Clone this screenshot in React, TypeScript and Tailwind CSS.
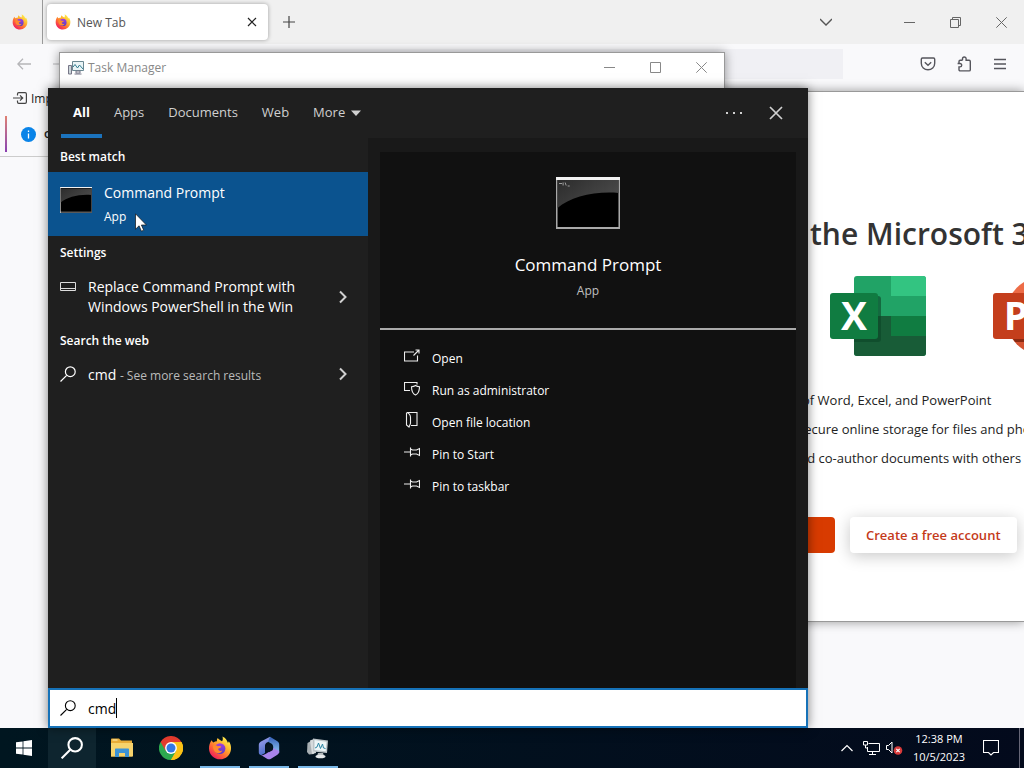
import { useState, type ReactNode } from "react";

const tabs = ["All", "Apps", "Documents", "Web"];

function FirefoxLogo({ className }: { className: string }) {
  return (
    <svg viewBox="0 0 24 24" className={className} aria-hidden="true">
      <defs>
        <linearGradient id="fx-body" x1="0.85" y1="0.1" x2="0.2" y2="0.95">
          <stop offset="0" stopColor="#fff14f" />
          <stop offset="0.35" stopColor="#ffb32c" />
          <stop offset="0.65" stopColor="#ff6a35" />
          <stop offset="1" stopColor="#f0195f" />
        </linearGradient>
        <linearGradient id="fx-globe" x1="0.5" y1="0" x2="0.5" y2="1">
          <stop offset="0" stopColor="#a23de0" />
          <stop offset="1" stopColor="#5a3fc0" />
        </linearGradient>
      </defs>
      <path
        d="M3.6 4.2C4 5.2 4.6 6 5.4 6.4 6.4 5.6 7.600 5.200 9 5.200 8.700 4 9 2.800 9.800 2c.9 1.500 2.500 2.300 4.200 3.200C15.200 4 14.900 1.700 14.400.4 18 2 19.300 4.600 19.800 6.700c.6-.3.9-.8 1-1.500 1.700 2.300 2.500 4.900 2.200 8C22.500 19 17.900 23.300 12 23.300 6 23.300 1.200 18.700 1 12.700.9 9.400 2 6.300 3.600 4.200Z"
        fill="url(#fx-body)"
      />
      <circle cx="12" cy="12.600" r="5.400" fill="url(#fx-globe)" />
      <path
        d="M5 9.600c2-.9 3.900-.4 5 .6 1.200-.2 2.900-.1 3.200.5-.3 1.100-2.300 1.300-2.900 2-.3 1.700 1.600 2.900 4.100 1.900-.9 2.300-3.700 3.400-6.100 2.200C6 15.700 4.700 12.500 5 9.600Z"
        fill="#ff8a2f"
      />
    </svg>
  );
}

function ConsoleIcon({ className, small }: { className: string; small?: boolean }) {
  return (
    <svg viewBox="0 0 63 52" className={className} preserveAspectRatio="none" aria-hidden="true">
      <defs>
        <linearGradient id="con-shine" x1="0" y1="0" x2="1" y2="0.6">
          <stop offset="0" stopColor="#2c2c2c" />
          <stop offset="1" stopColor="#4b4b4b" />
        </linearGradient>
      </defs>
      <rect width="63" height="52" fill={small ? "#5a5a5a" : "#a9a9a9"} />
      <rect width="63" height={small ? 2 : 3} fill="#f2f2f2" />
      {small && <rect width="1.500" height="52" fill="#d8d8d8" />}
      <rect x="1.500" y={small ? 2 : 3} width="60" height="47" fill="#000" />
      <path d="M1.500 3H61.500V16C38 14 14 20 1.500 31Z" fill="url(#con-shine)" />
      {!small && <path d="M3 6.500h3M7 5.500v3M9 5.500l1 3M11.500 9h2" stroke="#aaa" strokeWidth="0.900" />}
    </svg>
  );
}

function SearchGlyph({ className, weight }: { className: string; weight: number }) {
  return (
    <svg viewBox="0 0 16 16" className={className} fill="none" stroke="currentColor" strokeWidth={weight} aria-hidden="true">
      <circle cx="10.300" cy="5.700" r="4.900" />
      <path d="M6.700 9.300.5 15.500" />
    </svg>
  );
}

function ChevronRight() {
  return (
    <svg viewBox="0 0 8 14" className="h-3.5 w-2" fill="none" stroke="#d0d0d0" strokeWidth="2" aria-hidden="true">
      <path d="M1 1.500 6.500 7 1 12.500" />
    </svg>
  );
}

function WindowButtons({ restore }: { restore?: boolean }) {
  return (
    <div className={restore ? "flex text-[#666]" : "flex text-[#888]"}>
      <button type="button" aria-label="Minimize" className="flex h-7 w-[46px] items-center justify-center">
        <svg viewBox="0 0 11 11" className="size-[11px]" stroke="currentColor" fill="none"><path d="M0 5.500h11" /></svg>
      </button>
      <button type="button" aria-label="Maximize" className="flex h-7 w-[46px] items-center justify-center">
        <svg viewBox="0 0 11 11" className="size-[11px]" stroke="currentColor" fill="none">
          {restore ? <path d="M.5 2.500h8v8h-8zM2.500 2.500v-2h8v8h-2" /> : <path d="M.5.5h10v10H.5z" />}
        </svg>
      </button>
      <button type="button" aria-label="Close" className="flex h-7 w-[46px] items-center justify-center">
        <svg viewBox="0 0 11 11" className="size-[11px]" stroke="currentColor" fill="none"><path d="m.3.3 10.400 10.400M10.700.3.3 10.700" /></svg>
      </button>
    </div>
  );
}

function FirefoxWindow() {
  return (
    <div className="absolute inset-0 flex flex-col bg-[#f9f9fb] text-[#444]">
      <div className="flex h-11 items-center bg-[#f0f0f0]">
        <div className="flex h-full w-[43px] items-center border-r border-[#999] pl-3">
          <FirefoxLogo className="size-4" />
        </div>
        <div className="ml-1 flex h-9 w-[221px] items-center rounded bg-white pr-2.5 pl-2 shadow-[0_0_4px_rgba(0,0,0,0.35)]">
          <FirefoxLogo className="size-4" />
          <span className="ml-1.5 flex-1 pt-0.5 text-xs text-[#555]">New Tab</span>
          <button type="button" aria-label="Close tab">
            <svg viewBox="0 0 12 12" className="size-3" stroke="#222" strokeWidth="1.200"><path d="m2 2 8 8M10 2l-8 8" /></svg>
          </button>
        </div>
        <button type="button" aria-label="Open a new tab" className="ml-[15px]">
          <svg viewBox="0 0 12 12" className="size-3" stroke="#444" strokeWidth="1.200"><path d="M6 0v12M0 6h12" /></svg>
        </button>
        <button type="button" aria-label="List all tabs" className="mr-[54px] ml-auto">
          <svg viewBox="0 0 12 12" className="size-3" fill="none" stroke="#555" strokeWidth="1.400"><path d="m0 3 6 6 6-6" /></svg>
        </button>
        <WindowButtons restore />
      </div>
      <div className="flex h-10 items-center">
        <button type="button" aria-label="Back" className="ml-[17px]">
          <svg viewBox="0 0 14 12" className="h-3 w-3.5" fill="none" stroke="#b5b5b8" strokeWidth="1.300"><path d="M14 6H1M6 .800.8 6 6 11.200" /></svg>
        </button>
        <svg viewBox="0 0 14 12" className="ml-[22px] h-3 w-3.5" fill="none" stroke="#c5c5c8" strokeWidth="1.300"><path d="M0 6h13" /></svg>
        <div className="mr-[77px] ml-8 h-[30px] flex-1 bg-[#f0f0f4]" />
        <div className="mr-4 flex items-center gap-5 text-[#55555c]">
          <button type="button" aria-label="Save to Pocket">
            <svg viewBox="0 0 16 16" className="size-4" fill="none" stroke="currentColor" strokeWidth="1.400">
              <path d="M2.500 2h11c.7 0 1.200.5 1.200 1.200v4c0 3.900-3 6.600-6.700 6.600S1.300 11.100 1.300 7.200v-4C1.300 2.500 1.800 2 2.500 2Z" />
              <path d="m4.800 6.200 3.200 3 3.200-3" />
            </svg>
          </button>
          <button type="button" aria-label="Extensions">
            <svg viewBox="0 0 16 16" className="size-4" fill="none" stroke="currentColor" strokeWidth="1.400">
              <path d="M6.500 4.300V2.800a1.800 1.800 0 0 1 3.600 0v1.500h3c.7 0 1.200.5 1.200 1.200v8.200c0 .7-.5 1.200-1.200 1.200H4.200c-.7 0-1.200-.5-1.200-1.200v-2.800H4a1.700 1.700 0 0 0 0-3.400H1.600M3 7.300V5.500c0-.7.5-1.200 1.200-1.200h2.300" />
            </svg>
          </button>
          <button type="button" aria-label="Open menu">
            <svg viewBox="0 0 16 16" className="size-4" stroke="currentColor" strokeWidth="1.300"><path d="M2 3.500h12M2 8h12M2 12.500h12" /></svg>
          </button>
        </div>
      </div>
      <div className="flex h-7 items-center pl-[13px] text-xs text-[#222]">
        <svg viewBox="0 0 14 12" className="mr-1 h-3 w-3.5" fill="none" stroke="#444" strokeWidth="1.200">
          <path d="M4.500 3.500V2c0-.8.5-1.300 1.300-1.300h6.300c.8 0 1.300.5 1.300 1.300v8c0 .8-.5 1.300-1.300 1.300H5.800c-.8 0-1.300-.5-1.300-1.300V8.500M0 6h9.500M7 3.300 9.700 6 7 8.700" />
        </svg>
        <a href="#import" className="pt-0.5">Import</a>
      </div>
      <div className="flex h-[45px] items-center border-b border-[#ccc] pl-[5px]">
        <div className="h-9 w-0.5 bg-linear-to-b from-[#e08070] to-[#8a3fb0]" />
        <svg viewBox="0 0 15 15" className="ml-3.5 size-[15px]" aria-hidden="true">
          <circle cx="7.500" cy="7.500" r="7.500" fill="#0a84e8" />
          <path d="M7.500 6.500v5M7.500 3.500V5" stroke="#fff" strokeWidth="1.300" />
        </svg>
        <span className="ml-2 text-xs font-semibold text-[#222]">o</span>
      </div>
    </div>
  );
}

const perks = [
  { text: "of Word, Excel, and PowerPoint", indent: "pl-3" },
  { text: "secure online storage for files and photos", indent: "pl-2" },
  { text: "and co-author documents with others", indent: "pl-0.5" },
];

function OfficeWindow() {
  return (
    <div className="absolute top-[91px] right-0 bottom-[106px] left-[720px] overflow-hidden border-y border-[#999] bg-white shadow-[0_0_10px_rgba(0,0,0,0.4)]">
      <div className="flex flex-col pt-[116px] pl-[70px] whitespace-nowrap">
        <h1 className="pl-5 text-[30px] leading-[52px] font-semibold text-[#333]">the Microsoft 365</h1>
        <div className="mt-[15px] flex gap-[67px] pl-10">
          <svg viewBox="0 0 96 82" className="h-[82px] w-24 shrink-0" role="img" aria-label="Excel">
            <rect x="24" y="1" width="72" height="80" rx="3" fill="#21a366" />
            <path d="M61 1h32a3 3 0 0 1 3 3v17H61z" fill="#33c481" />
            <path d="M24 41h37v20H24z" fill="#185c37" />
            <path d="M61 41h35v20H61z" fill="#107c41" />
            <path d="M24 61h72v17a3 3 0 0 1-3 3H27a3 3 0 0 1-3-3z" fill="#185c37" />
            <path d="M24 21h24a3 3 0 0 1 3 3v40a3 3 0 0 1-3 3H24z" fill="#0c4527" opacity="0.600" />
            <rect x="0" y="18" width="48" height="46" rx="3" fill="#107c41" />
            <text x="24" y="55" textAnchor="middle" fontSize="39" fontWeight="700" fill="#fff">X</text>
          </svg>
          <svg viewBox="0 0 96 82" className="h-[82px] w-24 shrink-0" role="img" aria-label="PowerPoint">
            <path d="M52 1a40 40 0 0 0-40 40h40z" fill="#ed6c47" />
            <path d="M52 1a40 40 0 0 1 40 40H52z" fill="#ff8f6b" />
            <path d="M12 41a40 40 0 0 0 80 0z" fill="#d35230" />
            <path d="M16 58h32V21a3 3 0 0 1 3 3v40a3 3 0 0 1-3 3H22z" fill="#8a2a12" />
            <rect x="0" y="18" width="48" height="46" rx="3" fill="#c43e1c" />
            <text x="23" y="55" textAnchor="middle" fontSize="39" fontWeight="700" fill="#fff">P</text>
          </svg>
        </div>
        <ul className="mt-[29px] text-[13px] leading-[29px] text-[#222]">
          {perks.map((perk) => (
            <li key={perk.text} className={perk.indent}>{perk.text}</li>
          ))}
        </ul>
        <div className="mt-11 flex gap-[15px]">
          <div className="h-9 w-[45px] rounded-sm bg-[#d83b01]" />
          <button type="button" className="h-9 rounded-sm bg-white px-4 pt-px text-[13px] font-semibold text-[#c43a1a] shadow-[0_3px_16px_rgba(0,0,0,0.22)]">
            Create a free account
          </button>
        </div>
      </div>
    </div>
  );
}

function TaskManagerWindow() {
  return (
    <div className="absolute top-[52px] left-[59px] h-60 w-[666px] border border-[#999] bg-white shadow-[0_0_10px_rgba(0,0,0,0.4)]">
      <div className="flex h-[29px] items-center pl-2">
        <svg viewBox="0 0 16 14" className="h-3.5 w-4" fill="none" aria-hidden="true">
          <path d="M.5 4.500h3v8.500h-3z" fill="#ccd6da" stroke="#778" />
          <path d="M4.500.5h11v9h-11z" fill="#eaf4f6" stroke="#6a8791" />
          <path d="m5 6 2-2.500L9.500 7l2-3 3.500 4" stroke="#337d91" />
          <path d="M8 10h4v2H8zM6.500 13h7" stroke="#778" />
        </svg>
        <span className="ml-1 flex-1 text-xs text-[#888]">Task Manager</span>
        <WindowButtons />
      </div>
    </div>
  );
}

function SettingsIcon() {
  return (
    <svg viewBox="0 0 16 10" className="h-2.5 w-4" fill="none" stroke="#ddd" aria-hidden="true">
      <path d="M.5.5h15v8H.5zM.5 6.500h15" />
    </svg>
  );
}

const pinPath = <path d="M0 8h6M6.500 3.500v9M6.500 5l2 1h4l3-1.500v7l-3-1.500h-4l-2 1" />;

const actions: { label: string; icon: ReactNode }[] = [
  { label: "Open", icon: <path d="M10 4H.5v9h13V7.500M9.500 7.500 15 2M11.500 2H15v3.500" /> },
  { label: "Run as administrator", icon: <path d="M13 4.500v-2H.5v8H6M11.500 5.500c1.300.9 2.500 1.200 4 1.200 0 4-1 6.800-4 8.300-3-1.500-4-4.300-4-8.300 1.500 0 2.700-.3 4-1.200Z" /> },
  { label: "Open file location", icon: <path d="M3 .5h10v13H7M3 .500c2.500 1 3.500 2.500 3.500 5v6L5 15l-2.500-2V.500" /> },
  { label: "Pin to Start", icon: pinPath },
  { label: "Pin to taskbar", icon: pinPath },
];

function SearchPanel() {
  const [tab, setTab] = useState("All");

  return (
    <div className="absolute top-[88px] bottom-0 left-12 flex w-[760px] flex-col bg-[#1f1f1f] text-white shadow-[0_0_10px_rgba(0,0,0,0.5)]">
      <div className="flex h-[50px] text-[13px] text-[#d0d0d0]">
        <div className="flex pl-[13px]">
          {tabs.map((name) => (
            <button
              key={name}
              type="button"
              onClick={() => setTab(name)}
              className={
                name === tab
                  ? "border-b-4 border-[#1b73bd] px-3 pt-1 font-bold text-white"
                  : "border-b-4 border-transparent px-3 pt-1"
              }
            >
              {name}
            </button>
          ))}
          <button type="button" className="flex items-center gap-1.5 border-b-4 border-transparent px-3 pt-1">
            More
            <svg viewBox="0 0 10 6" className="h-1.5 w-2.5" fill="currentColor"><path d="M0 .5h10L5 6z" /></svg>
          </button>
        </div>
        <div className="ml-auto flex items-center gap-[27px] pr-[25px]">
          <button type="button" aria-label="Options">
            <svg viewBox="0 0 16 4" className="h-1 w-4" fill="currentColor"><path d="M0 1h2v2H0zM7 1h2v2H7zM14 1h2v2h-2z" /></svg>
          </button>
          <button type="button" aria-label="Close search">
            <svg viewBox="0 0 14 14" className="size-3.5" stroke="currentColor" strokeWidth="1.700"><path d="m1 1 12 12M13 1 1 13" /></svg>
          </button>
        </div>
      </div>

      <div className="flex flex-1">
        <div className="w-80">
          <h2 className="pt-1 pl-3 text-xs leading-[30px] font-semibold">Best match</h2>
          <button type="button" className="flex h-16 w-full items-start gap-3 bg-[#0b538f] pl-3 text-left">
            <ConsoleIcon small className="mt-[15px] h-[26px] w-8" />
            <span className="flex flex-col pt-[9px]">
              <span className="text-sm leading-6">Command Prompt</span>
              <span className="text-xs leading-6">App</span>
            </span>
          </button>
          <h2 className="pl-3 text-xs leading-[34px] font-semibold">Settings</h2>
          <button type="button" className="flex w-full items-center py-[7px] pr-[21px] pl-3 text-left">
            <span className="mb-5">
              <SettingsIcon />
            </span>
            <span className="ml-3 flex-1 text-sm leading-5">
              Replace Command Prompt with
              <br />
              Windows PowerShell in the Win
            </span>
            <ChevronRight />
          </button>
          <h2 className="pl-3 text-xs leading-[34px] font-semibold">Search the web</h2>
          <button type="button" className="flex h-8 w-full items-center pr-[21px] pl-3 text-left">
            <SearchGlyph className="size-4" weight={1.2} />
            <span className="ml-3 flex-1 pt-px text-sm">
              cmd <span className="text-xs text-[#bbb]">- See more search results</span>
            </span>
            <ChevronRight />
          </button>
        </div>

        <div className="flex flex-1 bg-[#191919] px-3 pt-3.5">
          <div className="flex-1 bg-[#111]">
            <div className="flex h-[178px] flex-col items-center border-b-2 border-[#aaa] pt-[25px]">
              <ConsoleIcon className="h-[52px] w-16" />
              <h1 className="mt-6 text-[17px] leading-6">Command Prompt</h1>
              <p className="mt-0.5 text-xs leading-6 text-[#c0c0c0]">App</p>
            </div>
            <ul className="pt-[13px] pl-6 text-xs">
              {actions.map((action) => (
                <li key={action.label}>
                  <button type="button" className="flex h-8 items-center gap-3">
                    <svg viewBox="0 0 16 16" className="mb-1.5 size-4" fill="none" stroke="#eee" strokeWidth="1.100" aria-hidden="true">
                      {action.icon}
                    </svg>
                    {action.label}
                  </button>
                </li>
              ))}
            </ul>
          </div>
        </div>
      </div>

      <label className="flex h-10 items-center border-2 border-[#1672b8] bg-white pl-2.5 text-black">
        <SearchGlyph className="size-4" weight={1.1} />
        <input aria-label="Search" defaultValue="cmd" className="ml-3 field-sizing-content pt-0.5 text-sm outline-none" />
        <span className="h-5 w-px bg-black" />
      </label>

      <svg viewBox="0 0 12 19" className="absolute top-[125px] left-[87px] h-[19px] w-3" aria-hidden="true">
        <path d="M.5.800v15.400l3.600-3.400 2.300 5.400 2.300-1-2.300-5.200h5z" fill="#fff" stroke="#111" strokeWidth="0.700" />
      </svg>
    </div>
  );
}

const apps: { name: string; open?: boolean; icon: ReactNode }[] = [
  {
    name: "File Explorer",
    icon: (
      <svg viewBox="0 0 22 20" className="h-5 w-[22px]">
        <path d="M0 1.500C0 1 .4.500 1 .500h7l2 2h11v16H0z" fill="#e9ad38" />
        <path d="M0 5h22v13.500H0z" fill="#f6d36c" />
        <path d="M4 11.500c0-.6.4-1 1-1h12c.6 0 1 .4 1 1V19h-4v-4H8v4H4z" fill="#3c93d6" />
        <path d="M1.500 2h5" stroke="#fff2b8" />
      </svg>
    ),
  },
  {
    name: "Google Chrome",
    icon: (
      <svg viewBox="0 0 24 24" className="size-6">
        <path d="M12 12 1.600 6A12 12 0 0 1 22.400 6Z" fill="#e33b2e" />
        <path d="M12 12 22.400 6A12 12 0 0 1 12 24Z" fill="#fbc116" />
        <path d="M12 12v12A12 12 0 0 1 1.600 6Z" fill="#2da94f" />
        <path d="M12 6h10.400L17.200 15z" fill="#fbc116" />
        <path d="M17.200 15 12 24 6.800 15z" fill="#2da94f" />
        <path d="M6.800 15 1.600 6 12 6z" fill="#e33b2e" />
        <path d="M17.200 15 12 24a12 12 0 0 0 10.400-18H12z" fill="#fbc116" />
        <circle cx="12" cy="12" r="5.900" fill="#fff" />
        <circle cx="12" cy="12" r="4.500" fill="#3478e5" />
      </svg>
    ),
  },
  { name: "Firefox", open: true, icon: <FirefoxLogo className="size-6" /> },
  {
    name: "Microsoft 365",
    open: true,
    icon: (
      <svg viewBox="0 0 22 24" className="h-6 w-[22px]">
        <defs>
          <linearGradient id="m365-a" x1="0" y1="0" x2="0.400" y2="1">
            <stop offset="0" stopColor="#a7a6f0" />
            <stop offset="1" stopColor="#4a6cc8" />
          </linearGradient>
          <linearGradient id="m365-b" x1="0" y1="0" x2="0" y2="1">
            <stop offset="0" stopColor="#3560b8" />
            <stop offset="1" stopColor="#8fc5f2" />
          </linearGradient>
        </defs>
        <path d="M12 .800 3 5.500C1.500 6.300.800 7.500.800 9v7.500c0 2 1.700 3 3.200 2.200l3-1.600V10c0-1.500.7-2.700 2-3.400L14 4z" fill="url(#m365-a)" />
        <path d="M12 .800 19 5c1.500.9 2.200 2 2.200 3.500V17l-6-2v-4c0-1.600-.7-2.800-2-3.500L10 5.800z" fill="url(#m365-b)" />
        <path d="M21.200 15c0 2-.7 3-2.200 4l-6 3.700c-1.400.8-2.700.8-4 0L3 19c3 .8 5-1.500 8-3.200l4.200-2.500V12z" fill="#a884ea" />
        <path d="M11 8 14.600 10.200v4L11 16.300 7.400 14.200v-4z" fill="#061522" />
      </svg>
    ),
  },
  {
    name: "Task Manager",
    open: true,
    icon: (
      <svg viewBox="0 0 24 22" className="h-[22px] w-6">
        <path d="M1.500 6 5 4l3 1v12l-5 .500L1 15z" fill="#a8afb3" />
        <path d="M4 3.500 8 2l2 14-4 1z" fill="#d7dbdd" />
        <path d="M7 1.500 22 3.500 21 16 7 14.500z" fill="#bcc4c8" />
        <path d="M8.500 3 20.500 4.700 19.700 14.300 8.500 13z" fill="#eef6f8" />
        <path d="m9 11 2-1 1.500-4 2 5.500 2-4.500 1 4 2 .5" fill="none" stroke="#2e87a5" />
        <path d="M12 16h5l1 3H11z" fill="#b4babd" />
        <ellipse cx="14.500" cy="19.500" rx="5" ry="1.800" fill="#e5e8ea" />
      </svg>
    ),
  },
];

function Taskbar() {
  return (
    <div className="flex h-10 shrink-0 bg-linear-to-r from-[#001620] to-[#030a1c] text-white">
      <div className="flex">
        <button type="button" aria-label="Start" className="flex w-12 items-center justify-center">
          <svg viewBox="0 0 16 16" className="size-4" fill="#fff">
            <path d="M0 2.300 6.600 1.400V7.600H0zM7.400 1.200 16 0v7.600H7.400zM0 8.400h6.600v6.200L0 13.700zM7.400 8.400H16V16l-8.600-1.200z" />
          </svg>
        </button>
        <button type="button" aria-label="Search" className="mr-0.5 flex w-12 items-center justify-center bg-[#0e252f]">
          <SearchGlyph className="size-[22px]" weight={1.5} />
        </button>
        {apps.map((app) => (
          <button key={app.name} type="button" aria-label={app.name} className="mr-px flex w-12 flex-col items-center">
            <span className="flex h-[38px] items-center pt-0.5">{app.icon}</span>
            {app.open && <span className="h-0.5 w-10 bg-[#7ab8e8]" />}
          </button>
        ))}
      </div>
      <div className="ml-auto flex items-center">
        <button type="button" aria-label="Show hidden icons">
          <svg viewBox="0 0 12 8" className="h-2 w-3" fill="none" stroke="#fff" strokeWidth="1.200"><path d="M.5 7 6 1.500 11.500 7" /></svg>
        </button>
        <svg viewBox="0 0 17 14" className="ml-2.5 h-3.5 w-[17px]" fill="none" stroke="#fff" role="img" aria-label="Network">
          <path d="M5.500 2.500h11v8h-12V6M.5.500h4v3.500h-4zM2.500 4v3h2M9.500 10.500v3M6 13.500h7" />
        </svg>
        <svg viewBox="0 0 17 14" className="ml-1.5 h-3.5 w-[17px]" fill="none" role="img" aria-label="Volume muted">
          <path d="M.500 4.500h2L6 1v11L2.500 8.500h-2z" stroke="#fff" />
          <circle cx="12" cy="9.500" r="4.300" fill="#d83a3a" />
          <path d="m10.300 7.800 3.400 3.400M13.700 7.800l-3.400 3.400" stroke="#fff" strokeWidth="1.100" />
        </svg>
        <div className="ml-2.5 text-center text-[11px] leading-[18px]">
          <div>12:38 PM</div>
          <div>10/5/2023</div>
        </div>
        <button type="button" aria-label="Notifications" className="ml-[18px]">
          <svg viewBox="0 0 16 16" className="size-4" fill="none" stroke="#fff" strokeWidth="1.100"><path d="M.500.500h15v12H10.500L8 15l-2.500-2.500h-5z" /></svg>
        </button>
        <div className="mr-1 ml-5 h-10 w-px bg-[#667]" />
      </div>
    </div>
  );
}

export default function App() {
  return (
    <div className="flex h-screen flex-col overflow-hidden font-['Open_Sans','Noto_Sans',sans-serif]">
      <div className="relative flex-1">
        <FirefoxWindow />
        <OfficeWindow />
        <TaskManagerWindow />
        <SearchPanel />
      </div>
      <Taskbar />
    </div>
  );
}
